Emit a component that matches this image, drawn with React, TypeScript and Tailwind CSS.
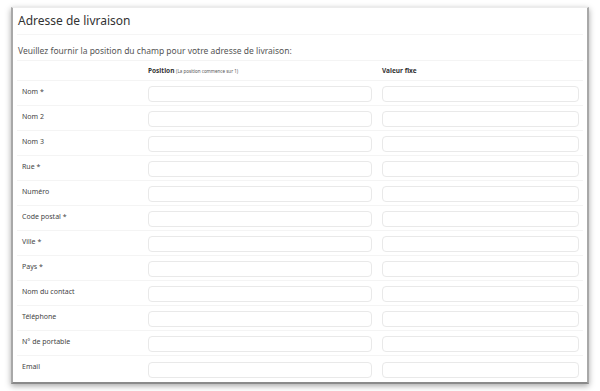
const rows = [
  'Nom *',
  'Nom 2',
  'Nom 3',
  'Rue *',
  'Numéro',
  'Code postal *',
  'Ville *',
  'Pays *',
  'Nom du contact',
  'Téléphone',
  'N° de portable',
  'Email',
]

function FieldRow({ label, last }: { label: string; last: boolean }) {
  return (
    <div className={`flex h-[25px] items-center pt-[2px] ${last ? '' : 'border-b border-[#f4f4f4]'}`}>
      <div className="w-[131px] shrink-0 pb-[4px] pl-[5px] text-[7px] text-[#444]">{label}</div>
      <input
        type="text"
        className="h-[16px] w-[224px] shrink-0 rounded-[4px] border border-[#e9e9e9] bg-white outline-none"
      />
      <input
        type="text"
        className="ml-[10px] h-[16px] w-[197px] shrink-0 rounded-[4px] border border-[#e9e9e9] bg-white outline-none"
      />
    </div>
  )
}

export default function App() {
  return (
    <div
      className="h-[391px] w-[600px] overflow-hidden bg-white pl-[11px] pt-[7px]"
      style={{ fontFamily: '"Noto Sans", "Open Sans", sans-serif' }}
    >
      <div className="h-[377px] w-[578px] border-x-2 border-b-2 border-t border-x-[#a8a8a8] border-b-[#8a8a8a] border-t-[#ececec] bg-white shadow-[0_2px_6px_rgba(0,0,0,0.35)]">
        {/* Title */}
        <div className="flex h-[26px] items-center pl-[5px] text-[12px] text-[#333]">
          Adresse de livraison
        </div>
        <div className="px-[4px]">
          <div className="border-t border-[#f5f5f5]" />
          {/* Intro */}
          <div className="flex h-[25px] items-end pb-[2px] pl-[1px] text-[8.5px] text-[#555]">
            Veuillez fournir la position du champ pour votre adresse de livraison:
          </div>
          <div className="border-t border-[#f4f4f4]" />
          {/* Column headers */}
          <div className="flex h-[20px] items-center border-b border-[#f4f4f4] pt-[1px]">
            <div className="w-[131px] shrink-0" />
            <div className="w-[224px] shrink-0 text-[6.5px] text-[#333]">
              <span className="font-bold">Position</span>{' '}
              <span className="text-[4.5px] text-[#555]">(La position commence sur 1)</span>
            </div>
            <div className="ml-[10px] text-[6.5px] font-bold text-[#333]">Valeur fixe</div>
          </div>
          {rows.map((r, i) => (
            <FieldRow key={r} label={r} last={i === rows.length - 1} />
          ))}
        </div>
      </div>
    </div>
  )
}
